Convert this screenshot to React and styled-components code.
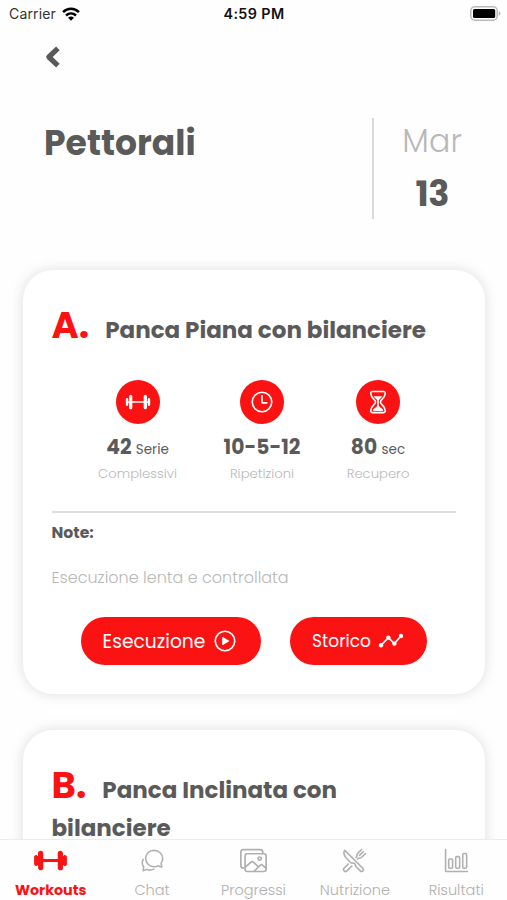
import React from 'react';
import styled, { createGlobalStyle } from 'styled-components';
import {
  IoBarbell,
  IoBarbellOutline,
  IoBarChartOutline,
  IoChatbubblesOutline,
  IoHourglassOutline,
  IoImagesOutline,
  IoPlayCircleOutline,
  IoRestaurantOutline,
  IoTimeOutline,
} from 'react-icons/io5';

const GlobalStyle = createGlobalStyle`
  * {
    box-sizing: border-box;
  }
  body {
    margin: 0;
    background: #fefefe;
    font-family: Poppins, Inter, sans-serif;
    color: #5a5a5a;
  }
  svg {
    display: block;
    flex: none;
  }
`;

const Screen = styled.div`
  width: 507px;
  height: 900px;
  display: flex;
  flex-direction: column;
  overflow: hidden;
`;

const StatusBar = styled.div`
  flex: none;
  height: 28px;
  padding: 0 6px 1px 9px;
  display: grid;
  grid-template-columns: 1fr auto 1fr;
  align-items: center;
  font-family: Inter, sans-serif;
  font-size: 14px;
  color: #111;
`;

const Carrier = styled.div`
  display: flex;
  align-items: center;
  gap: 6px;
  color: #333;
  letter-spacing: 0.15px;
`;

const Clock = styled.div`
  margin-right: 2px;
  font-size: 14.3px;
  font-weight: 600;
  letter-spacing: 0.4px;
`;

const Battery = styled.div`
  justify-self: end;
`;

const Content = styled.main`
  flex: 1;
  min-height: 0;
  overflow: hidden;
  padding: 18px 22.5px 0;
`;

const BackButton = styled.button`
  display: block;
  margin: 0 0 50px 22px;
  padding: 0;
  border: 0;
  background: none;
`;

const Header = styled.header`
  display: flex;
  justify-content: space-between;
  height: 101px;
  margin-bottom: 51px;
  padding-left: 21.5px;
`;

const Title = styled.h1`
  margin: 0;
  font-size: 34.6px;
  line-height: 50px;
  font-weight: 700;
`;

const DateBox = styled.div`
  width: 112.5px;
  padding-left: 6px;
  border-left: 2px solid #d9d9d9;
  display: flex;
  flex-direction: column;
  align-items: center;
`;

const Month = styled.div`
  font-size: 31.5px;
  line-height: 46px;
  font-weight: 300;
  letter-spacing: 0.3px;
  color: #b8b8b8;
`;

const Day = styled.div`
  font-size: 35px;
  line-height: 60px;
  font-weight: 700;
  letter-spacing: -0.5px;
`;

const Card = styled.section`
  height: 424px;
  margin-bottom: 36px;
  padding: 41px 29px 0;
  border-radius: 30px;
  background: #fff;
  box-shadow: 0 0 14px rgba(0, 0, 0, 0.13);
`;

const Exercise = styled.h2`
  margin: 0;
  font-size: 23px;
  line-height: 38px;
  font-weight: 700;
`;

const Letter = styled.span`
  margin-right: 16px;
  font-size: 37px;
  line-height: 0;
  color: #fb1212;
`;

const Stats = styled.div`
  display: grid;
  grid-template-columns: 79px 77px 62px;
  justify-content: space-evenly;
  margin-top: 31px;
`;

const Stat = styled.div`
  display: flex;
  flex-direction: column;
  align-items: center;
  white-space: nowrap;
`;

const StatIcon = styled.div`
  width: 44px;
  height: 44px;
  border-radius: 50%;
  background: #fb1212;
  color: #fff;
  display: flex;
  align-items: center;
  justify-content: center;
`;

const StatValue = styled.div`
  margin-top: 8px;
  font-size: 20.3px;
  line-height: 30px;
  font-weight: 700;
`;

const Unit = styled.span`
  font-size: 13.5px;
  line-height: 0;
  font-weight: 400;
`;

const StatLabel = styled.div`
  font-size: 13.2px;
  line-height: 23px;
  font-weight: 300;
  color: #b8b8b8;
`;

const Divider = styled.hr`
  height: 2px;
  margin: 26px 0 0;
  border: 0;
  background: #dedede;
`;

const NoteTitle = styled.div`
  margin-top: 8px;
  font-size: 15.7px;
  line-height: 24px;
  font-weight: 700;
`;

const Note = styled.p`
  margin: 21px 0 0;
  font-size: 16px;
  line-height: 24px;
  font-weight: 300;
  color: #b8b8b8;
`;

const Actions = styled.div`
  display: flex;
  justify-content: space-evenly;
  margin-top: 27px;
`;

const ActionButton = styled.button`
  width: ${(props) => props.$width}px;
  height: 48px;
  padding: 0;
  border: 0;
  border-radius: 24px;
  background: #fb1212;
  color: #fff;
  font-family: inherit;
  font-size: ${(props) => props.$size}px;
  display: flex;
  align-items: center;
  justify-content: center;
  gap: 7px;
`;

const TabBar = styled.nav`
  flex: none;
  height: 61px;
  border-top: 1px solid #ececec;
  background: #fefefe;
  display: grid;
  grid-template-columns: repeat(5, 1fr);
`;

const Tab = styled.div`
  display: flex;
  flex-direction: column;
  align-items: center;
  font-size: ${(props) => (props.$active ? 14.3 : 14.5)}px;
  font-weight: ${(props) => (props.$active ? 700 : 300)};
  color: ${(props) => (props.$active ? '#fb1212' : '#b0b0b0')};
`;

const TabIcon = styled.div`
  height: 40px;
  display: flex;
  align-items: center;
`;

const TabLabel = styled.div`
  line-height: 20px;
  white-space: nowrap;
`;

function WifiIcon() {
  return (
    <svg width="18" height="14" viewBox="0 0 18 14" fill="none" stroke="#000" strokeWidth="2.6">
      <path d="M1.1 5.1C5.6.7 12.4.7 16.9 5.1" />
      <path d="M4 8.5C6.9 5.8 11.1 5.8 14 8.5" />
      <path d="M9 13.8L6 10.7Q9 8.2 12 10.7Z" fill="#000" stroke="none" />
    </svg>
  );
}

function BatteryIcon() {
  return (
    <svg width="31" height="15" viewBox="0 0 31 15">
      <rect x="0.8" y="0.8" width="26.4" height="13.4" rx="4" fill="#fff" stroke="#b9b9b9" strokeWidth="1.5" />
      <rect x="3" y="3" width="22.2" height="9" rx="1.5" fill="#000" />
      <path d="M28.7 5.2Q30.5 5.8 30.5 7.5T28.7 9.8Z" fill="#b9b9b9" />
    </svg>
  );
}

function BackIcon() {
  return (
    <svg width="16" height="22" viewBox="0 0 16 22">
      <path
        d="M12.9 2.4L3.8 11L12.9 19.6"
        fill="none"
        stroke="#5a5a5a"
        strokeWidth="5.2"
        strokeLinejoin="round"
      />
    </svg>
  );
}

function TrendIcon() {
  return (
    <svg width="26" height="16" viewBox="0 0 26 16" fill="#fff">
      <path d="M3 12.3L10.4 4.6L16.4 10.6L23 3" fill="none" stroke="#fff" strokeWidth="1.7" />
      <circle cx="3" cy="12.3" r="2.2" />
      <circle cx="10.4" cy="4.6" r="2.2" />
      <circle cx="16.4" cy="10.6" r="2.2" />
      <circle cx="23" cy="3" r="2.2" />
    </svg>
  );
}

const tabs = [
  { name: 'Workouts', Icon: IoBarbell, size: 35, active: true },
  { name: 'Chat', Icon: IoChatbubblesOutline, size: 25 },
  { name: 'Progressi', Icon: IoImagesOutline, size: 27 },
  { name: 'Nutrizione', Icon: IoRestaurantOutline, size: 25 },
  { name: 'Risultati', Icon: IoBarChartOutline, size: 25 },
];

function App() {
  return (
    <Screen>
      <GlobalStyle />
      <StatusBar>
        <Carrier>
          Carrier
          <WifiIcon />
        </Carrier>
        <Clock>4:59 PM</Clock>
        <Battery>
          <BatteryIcon />
        </Battery>
      </StatusBar>

      <Content>
        <BackButton aria-label="Indietro">
          <BackIcon />
        </BackButton>
        <Header>
          <Title>Pettorali</Title>
          <DateBox>
            <Month>Mar</Month>
            <Day>13</Day>
          </DateBox>
        </Header>

        <Card>
          <Exercise>
            <Letter>A.</Letter>
            Panca Piana con bilanciere
          </Exercise>
          <Stats>
            <Stat>
              <StatIcon><IoBarbellOutline size={26} /></StatIcon>
              <StatValue>
                42 <Unit>Serie</Unit>
              </StatValue>
              <StatLabel>Complessivi</StatLabel>
            </Stat>
            <Stat>
              <StatIcon><IoTimeOutline size={26} /></StatIcon>
              <StatValue>10-5-12</StatValue>
              <StatLabel>Ripetizioni</StatLabel>
            </Stat>
            <Stat>
              <StatIcon><IoHourglassOutline size={26} /></StatIcon>
              <StatValue>
                80 <Unit>sec</Unit>
              </StatValue>
              <StatLabel>Recupero</StatLabel>
            </Stat>
          </Stats>
          <Divider />
          <NoteTitle>Note:</NoteTitle>
          <Note>Esecuzione lenta e controllata</Note>
          <Actions>
            <ActionButton $width={180} $size={18.7}>
              Esecuzione
              <IoPlayCircleOutline size={26} />
            </ActionButton>
            <ActionButton $width={137} $size={17}>
              Storico
              <TrendIcon />
            </ActionButton>
          </Actions>
        </Card>

        <Card>
          <Exercise>
            <Letter>B.</Letter>
            Panca Inclinata con bilanciere
          </Exercise>
        </Card>
      </Content>

      <TabBar>
        {tabs.map(({ name, Icon, size, active }) => (
          <Tab key={name} $active={active}>
            <TabIcon><Icon size={size} /></TabIcon>
            <TabLabel>{name}</TabLabel>
          </Tab>
        ))}
      </TabBar>
    </Screen>
  );
}

export default App;
